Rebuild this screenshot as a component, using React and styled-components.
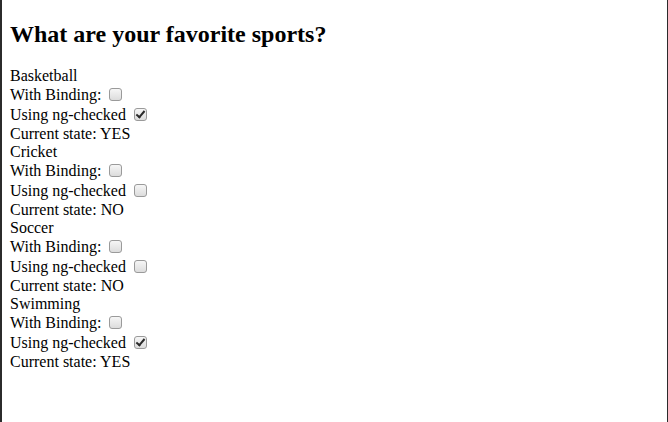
import React, { useState } from "react";
import styled, { createGlobalStyle } from "styled-components";

const GlobalStyle = createGlobalStyle`
  html, body {
    margin: 0;
    padding: 0;
    background: #fff;
  }
  body {
    font-family: "Liberation Serif", "Times New Roman", serif;
    font-size: 16px;
    color: #000;
  }
`;

const sports = [
  { name: "Basketball", selected: "YES" },
  { name: "Cricket", selected: "NO" },
  { name: "Soccer", selected: "NO" },
  { name: "Swimming", selected: "YES" }
];

const Frame = styled.div`
  box-sizing: border-box;
  min-height: 100vh;
  border-left: 2px solid #2b2b2b;
  border-right: 1px solid #2b2b2b;
  padding: 1px 8px 8px;
  overflow: hidden;
`;

const Title = styled.h2`
  font-size: 24px;
  font-weight: bold;
  margin: 20px 0 19px;
`;

const Line = styled.div`
  line-height: ${p => (p.$box ? "20px" : "18px")};
  height: ${p => (p.$box ? "20px" : "18px")};
`;

const Check = styled.input.attrs({ type: "checkbox" })`
  appearance: none;
  -webkit-appearance: none;
  box-sizing: border-box;
  width: 13px;
  height: 13px;
  margin: 0 3px 0 4px;
  vertical-align: -1px;
  border: 1px solid #9a9a9a;
  border-radius: 3px;
  background: linear-gradient(#f6f6f6, #dcdcdc);
  position: relative;

  &:checked::after {
    content: "";
    position: absolute;
    left: 3px;
    top: 0px;
    width: 3px;
    height: 7px;
    border: solid #2a2a2a;
    border-width: 0 2px 2px 0;
    transform: rotate(40deg);
  }
`;

function Sport({ name, selected }) {
  const [binding, setBinding] = useState(false);
  const [checked, setChecked] = useState(selected === "YES");
  return (
    <div>
      <Line>{name}</Line>
      <Line $box>
        With Binding:{" "}
        <Check checked={binding} onChange={e => setBinding(e.target.checked)} />
      </Line>
      <Line $box>
        Using ng-checked{" "}
        <Check checked={checked} onChange={e => setChecked(e.target.checked)} />
      </Line>
      <Line>Current state: {selected}</Line>
    </div>
  );
}

export default function App() {
  return (
    <Frame>
      <GlobalStyle />
      <Title>What are your favorite sports?</Title>
      {sports.map(s => (
        <Sport key={s.name} {...s} />
      ))}
    </Frame>
  );
}
